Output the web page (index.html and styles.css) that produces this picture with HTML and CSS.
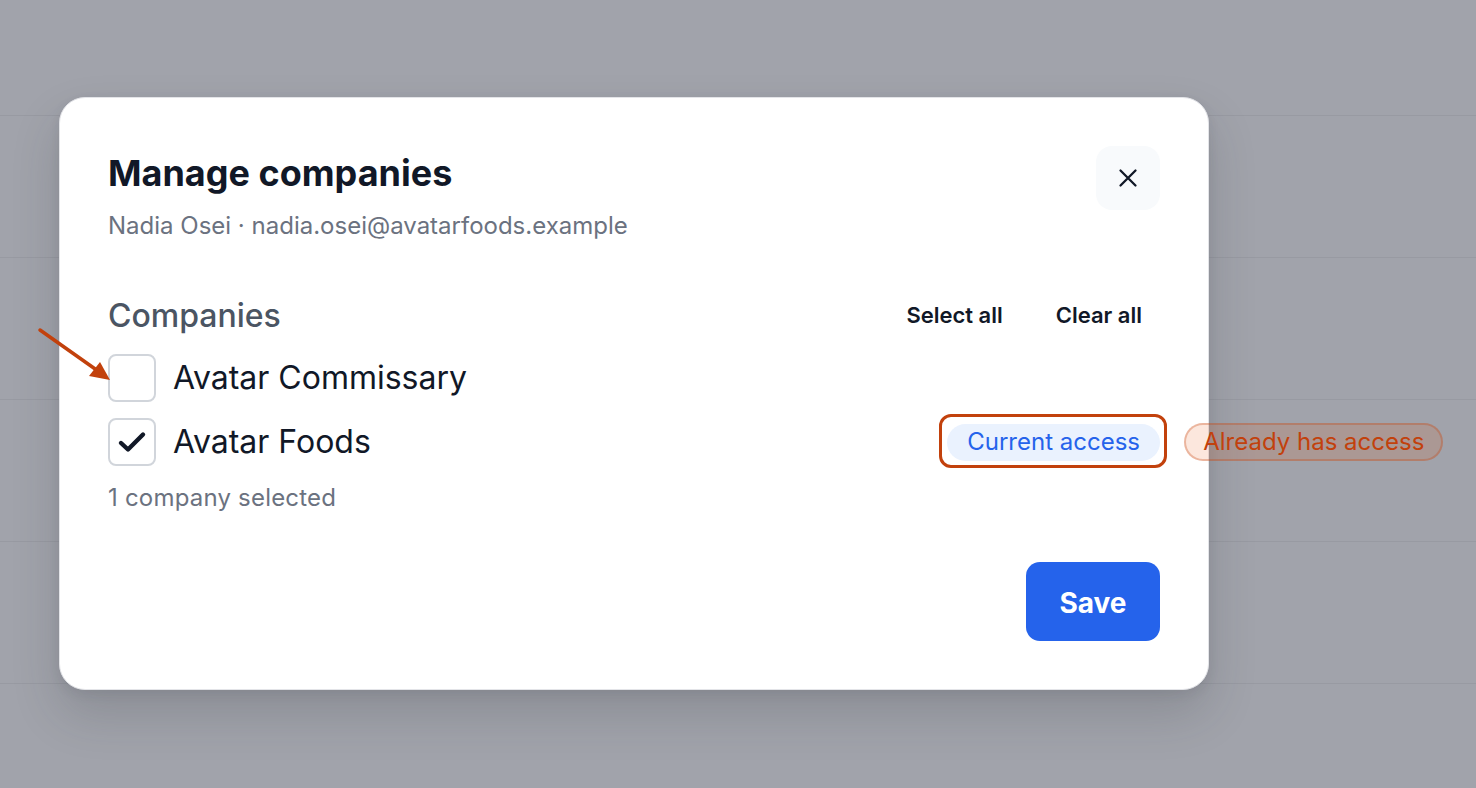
FILE: index.html
```html
<!DOCTYPE html>
<html lang="en">
<head>
<meta charset="utf-8">
<title>Manage companies</title>
<link rel="stylesheet" href="styles.css">
</head>
<body>
<div class="backdrop">
  <div class="bg-row first"></div>
  <div class="bg-row"></div>
  <div class="bg-row"></div>
  <div class="bg-row"></div>
  <div class="bg-row"></div>
</div>

<div class="modal" role="dialog" aria-label="Manage companies">
  <div class="modal-header">
    <div class="heading">
      <h1 class="title">Manage companies</h1>
      <p class="subtitle">Nadia Osei · nadia.osei@avatarfoods.example</p>
    </div>
    <button class="close-btn" aria-label="Close">
      <svg width="24" height="24" viewBox="0 0 24 24" fill="none" stroke="#111827" stroke-width="2.3" stroke-linecap="round"><path d="M4.5 4.5l15 15M19.5 4.5l-15 15"/></svg>
    </button>
  </div>

  <div class="section-head">
    <h2 class="section-title">Companies</h2>
    <div class="actions">
      <button class="link-btn">Select all</button>
      <button class="link-btn">Clear all</button>
    </div>
  </div>

  <div class="list">
    <label class="row">
      <span class="checkbox"></span>
      <span class="label">Avatar Commissary</span>
      <svg class="arrow" width="90" height="70" viewBox="0 0 90 70"><path d="M4 4L62 45" stroke="#c2410c" stroke-width="3.5" stroke-linecap="round"/><path d="M74 54L53 50L64 36Z" fill="#c2410c"/></svg>
    </label>
    <label class="row">
      <span class="checkbox checked">
        <svg width="32" height="32" viewBox="0 0 32 32" fill="none" stroke="#111827" stroke-width="4.4" stroke-linecap="round" stroke-linejoin="round"><path d="M5 17l7 6.5L27 8.5"/></svg>
      </span>
      <span class="label">Avatar Foods</span>
      <span class="pill-wrap">
        <span class="pill current">Current access</span>
        <span class="pill already">Already has access</span>
      </span>
    </label>
  </div>

  <p class="count">1 company selected</p>

  <div class="footer">
    <button class="save-btn">Save</button>
  </div>
</div>
</body>
</html>
```

FILE: styles.css
```css
* { box-sizing: border-box; }

html, body {
  margin: 0;
  padding: 0;
  width: 1476px;
  height: 788px;
  overflow: hidden;
}

body {
  background: #a1a3ab;
  font-family: Inter, "Noto Sans", sans-serif;
  position: relative;
}

.backdrop {
  display: flex;
  flex-direction: column;
}

.bg-row {
  height: 142px;
  border-bottom: 1px solid #989aa2;
}

.bg-row.first { height: 116px; }

.modal {
  position: absolute;
  left: 59px;
  top: 97px;
  width: 1150px;
  background: #ffffff;
  border: 1px solid #e3e4e8;
  border-radius: 26px;
  padding: 48px;
  box-shadow: 0 24px 48px rgba(40, 42, 50, 0.18), 0 4px 12px rgba(40, 42, 50, 0.08);
  display: flex;
  flex-direction: column;
}

.modal-header {
  display: flex;
  justify-content: space-between;
  align-items: flex-start;
}

.heading { padding-top: 5px; }

.title {
  margin: 0;
  font-size: 36px;
  line-height: 44px;
  font-weight: 700;
  color: #111827;
}

.subtitle {
  margin: 15px 0 0;
  font-size: 24px;
  line-height: 32px;
  color: #6b7280;
}

.close-btn {
  width: 64px;
  height: 64px;
  border: none;
  border-radius: 16px;
  background: #f8fafc;
  display: flex;
  align-items: center;
  justify-content: center;
  padding: 0;
}

.section-head {
  margin-top: 54px;
  display: flex;
  justify-content: space-between;
  align-items: center;
}

.section-title {
  margin: 0;
  font-size: 32px;
  line-height: 40px;
  font-weight: 500;
  color: #4b5563;
}

.actions {
  display: flex;
  gap: 17px;
  margin-top: -2px;
}

.link-btn {
  border: none;
  background: transparent;
  font-family: inherit;
  font-size: 22px;
  font-weight: 600;
  color: #111827;
  padding: 4px 18px;
  line-height: 30px;
}

.list {
  margin-top: 18px;
  display: flex;
  flex-direction: column;
  gap: 16px;
}

.row {
  display: flex;
  align-items: center;
  gap: 17px;
  position: relative;
}

.checkbox {
  width: 48px;
  height: 48px;
  border: 2px solid #d1d5db;
  border-radius: 8px;
  display: flex;
  align-items: center;
  justify-content: center;
  flex: none;
}

.label {
  font-size: 32px;
  line-height: 40px;
  color: #111827;
}

.arrow {
  position: absolute;
  left: -72px;
  top: -28px;
}

.pill-wrap {
  margin-left: auto;
  position: relative;
  display: flex;
}

.pill-wrap::after {
  content: "";
  position: absolute;
  left: -8px;
  right: -7px;
  top: -10px;
  bottom: -7px;
  border: 3px solid #c2410c;
  border-radius: 12px;
}

.pill {
  display: inline-flex;
  align-items: center;
  height: 37px;
  border-radius: 999px;
  font-size: 24px;
  line-height: 30px;
  white-space: nowrap;
}

.pill.current {
  padding: 0 20px;
  background: #eaf2fe;
  color: #2563eb;
}

.pill.already {
  position: absolute;
  left: 237px;
  top: -1px;
  height: 38px;
  padding: 0 17px;
  background: rgba(234, 88, 12, 0.14);
  border: 2px solid rgba(194, 65, 12, 0.3);
  color: #c2410c;
}

.count {
  margin: 16px 0 0;
  font-size: 24px;
  line-height: 32px;
  color: #6b7280;
  letter-spacing: 0.2px;
}

.footer {
  margin-top: 48px;
  display: flex;
  justify-content: flex-end;
}

.save-btn {
  width: 134px;
  height: 79px;
  border: none;
  border-radius: 14px;
  background: #2563eb;
  color: #ffffff;
  font-family: inherit;
  font-size: 28px;
  font-weight: 700;
  padding-top: 3px;
}
```
